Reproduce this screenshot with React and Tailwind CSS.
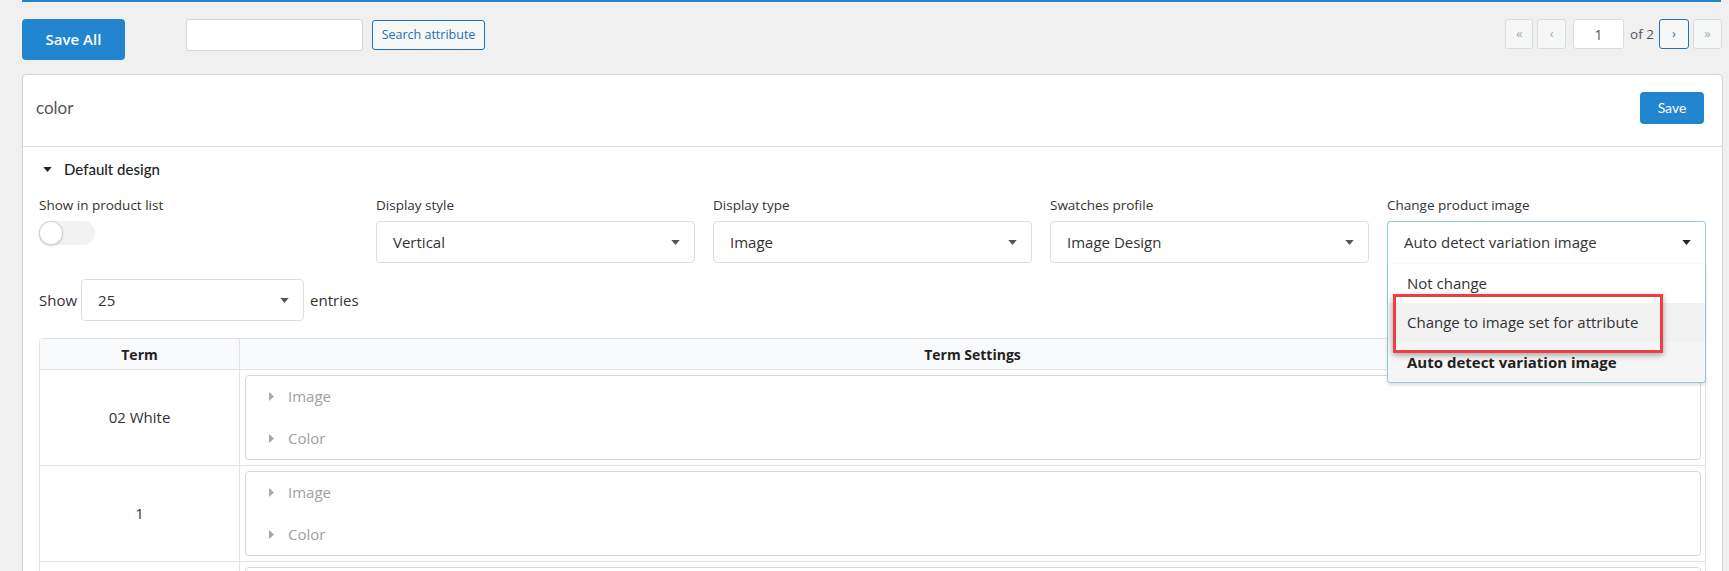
import { Fragment } from "react";

const seg = "font-['Open_Sans',sans-serif]";
const lato = "font-['Lato',sans-serif]";

function Caret({ className = "" }) {
    return (
        <svg viewBox="0 0 10 6" className={`w-[9px] h-[5px] ${className}`}>
            <path d="M0 0h10L5 6z" fill="currentColor" />
        </svg>
    );
}

function RightCaret() {
    return (
        <svg viewBox="0 0 5 9" className="w-[5px] h-[9px] text-[#a8a8a8]">
            <path d="M0 0l5 4.5L0 9z" fill="currentColor" />
        </svg>
    );
}

function Select({ value, className = "" }) {
    return (
        <div className={`flex items-center justify-between h-[42px] px-[16px] bg-white border border-[#dedede] rounded-[4px] text-[15px] text-[#333] ${className}`}>
            <span>{value}</span>
            <Caret className="text-[#555] mr-[-2px]" />
        </div>
    );
}

function ImageDropdown() {
    return (
        <div className="relative">
            <div className="flex items-center justify-between h-[42px] px-[16px] bg-white border border-[#96c8da] border-b-0 rounded-t-[4px] text-[15px] text-[#333]">
                <span>Auto detect variation image</span>
                <Caret className="text-[#222] mr-[-2px]" />
            </div>
            <div className="absolute z-10 left-0 right-0 top-full bg-white border border-t-0 border-[#96c8da] rounded-b-[4px] shadow-[0_2px_3px_0_rgba(34,36,38,0.15)] text-[15px]">
                <div className="h-[40px] flex items-center pl-[19px] border-t border-[#fafafa] text-[#333]">Not change</div>
                <div className="h-[39px] flex items-center pl-[19px] bg-[#f2f2f2] text-[#333]">Change to image set for attribute</div>
                <div className="h-[40px] flex items-center pl-[19px] bg-[#f5f5f5] font-bold text-[#222] rounded-b-[4px]">Auto detect variation image</div>
                <div className="absolute left-[5px] top-[31px] w-[270px] h-[59px] border-[3px] border-[#ee3e42] shadow-[0_2px_6px_rgba(0,0,0,0.35)]"></div>
            </div>
        </div>
    );
}

const terms = ["02 White", "1", null];

export default function App() {
    return (
        <div className={`min-h-screen bg-[#f0f0f1] ${seg} text-[#333] overflow-hidden`}>
            <div className="ml-[22px] mr-[8px] h-[2px] bg-[#2185d0]"></div>

            <div className="flex items-start pl-[22px] pr-[7px] pt-[17px]">
                <button className={`w-[103px] h-[41px] rounded-[4px] bg-[#2185d0] text-white text-[15px] font-semibold`}>Save All</button>
                <div className="ml-[61px] w-[177px] h-[32px] bg-white border border-[#d6d6d6] rounded-[3px]"></div>
                <button className="ml-[9px] mt-[1px] w-[113px] h-[30px] rounded-[3px] border border-[#2271b1] bg-[#f6f7f7] text-[#2271b1] text-[12.5px]">Search attribute</button>

                <div className="ml-auto flex items-center text-[#a7aaad]">
                    <div className="w-[28px] h-[30px] flex items-center justify-center border border-[#dcdcde] rounded-[3px] bg-[#f6f7f7] text-[13px]">«</div>
                    <div className="ml-[4px] w-[29px] h-[30px] flex items-center justify-center border border-[#dcdcde] rounded-[3px] bg-[#f6f7f7] text-[13px]">‹</div>
                    <div className="ml-[7px] w-[51px] h-[30px] flex items-center justify-center border border-[#dcdcde] rounded-[3px] bg-white text-[14px] text-[#50575e]">1</div>
                    <span className="ml-[6px] text-[13.5px] text-[#50575e]">of 2</span>
                    <div className="ml-[5px] w-[30px] h-[30px] flex items-center justify-center border border-[#2271b1] rounded-[3px] bg-[#f6f7f7] text-[13px] text-[#2271b1]">›</div>
                    <div className="ml-[4px] w-[29px] h-[30px] flex items-center justify-center border border-[#dcdcde] rounded-[3px] bg-[#f6f7f7] text-[13px]">»</div>
                </div>
            </div>

            <div className="ml-[22px] mr-[6px] mt-[14px] bg-white border border-[#d4d4d4] rounded-[4px]">
                <div className="h-[72px] flex items-center justify-between pl-[13px] pr-[18px] pb-[6px] border-b border-[#dddddd]">
                    <span className={`${lato} text-[17px] text-[#555]`}>color</span>
                    <button className={`${lato} w-[64px] h-[32px] rounded-[4px] bg-[#2185d0] text-white text-[14px]`}>Save</button>
                </div>

                <div className="px-[16px] pt-[12px]">
                    <div className={`flex items-center h-[20px] ${lato} text-[15px] font-medium text-[#222]`}>
                        <Caret className="ml-[4px] text-[#222]" />
                        <span className="ml-[12px]">Default design</span>
                    </div>

                    <div className="grid grid-cols-5 gap-x-[18px] mt-[16px]">
                        <div>
                            <div className="h-[20px] text-[13.5px] text-[#333]">Show in product list</div>
                            <div className="mt-[6px] relative w-[56px] h-[24px] rounded-full bg-[#f2f2f2]">
                                <div className="absolute left-0 top-0 w-[24px] h-[24px] rounded-full bg-white shadow-[0_1px_2px_0_rgba(34,36,38,0.2),0_0_0_1px_rgba(34,36,38,0.2)_inset]"></div>
                            </div>
                        </div>
                        <div>
                            <div className="h-[20px] text-[13.5px] text-[#333]">Display style</div>
                            <Select value="Vertical" className="mt-[6px]" />
                        </div>
                        <div>
                            <div className="h-[20px] text-[13.5px] text-[#333]">Display type</div>
                            <Select value="Image" className="mt-[6px]" />
                        </div>
                        <div>
                            <div className="h-[20px] text-[13.5px] text-[#333]">Swatches profile</div>
                            <Select value="Image Design" className="mt-[6px]" />
                        </div>
                        <div>
                            <div className="h-[20px] text-[13.5px] text-[#333]">Change product image</div>
                            <div className="mt-[6px]"><ImageDropdown /></div>
                        </div>
                    </div>

                    <div className="flex items-center mt-[16px] text-[15px] text-[#333]">
                        <span>Show</span>
                        <Select value="25" className="ml-[4px] w-[223px]" />
                        <span className="ml-[6px]">entries</span>
                    </div>

                    <div className="mt-[17px] border border-[#e2e2e2] rounded-t-[4px]">
                        <div className="grid grid-cols-[200px_1fr] h-[31px] bg-[#f9fafb] border-b border-[#e2e2e2] text-[14px] font-bold text-[#222]">
                            <div className="flex items-center justify-center border-r border-[#e2e2e2]">Term</div>
                            <div className="flex items-center justify-center">Term Settings</div>
                        </div>
                        {terms.map((t, i) => (
                            <Fragment key={i}>
                                <div className="grid grid-cols-[200px_1fr] border-b border-[#e2e2e2]">
                                    <div className="flex items-center justify-center border-r border-[#e2e2e2] text-[15px] text-[#333]">{t}</div>
                                    <div className="p-[5px] pr-[4px]">
                                        <div className="h-[85px] border border-[#d8d8d8] rounded-[4px] flex flex-col justify-center pl-[23px] gap-[20px] text-[15px] text-[#a0a0a0]">
                                            {t !== null && <>
                                                <div className="flex items-center h-[22px]"><RightCaret /><span className="ml-[14px]">Image</span></div>
                                                <div className="flex items-center h-[22px]"><RightCaret /><span className="ml-[14px]">Color</span></div>
                                            </>}
                                        </div>
                                    </div>
                                </div>
                            </Fragment>
                        ))}
                    </div>
                </div>
            </div>
        </div>
    );
}
